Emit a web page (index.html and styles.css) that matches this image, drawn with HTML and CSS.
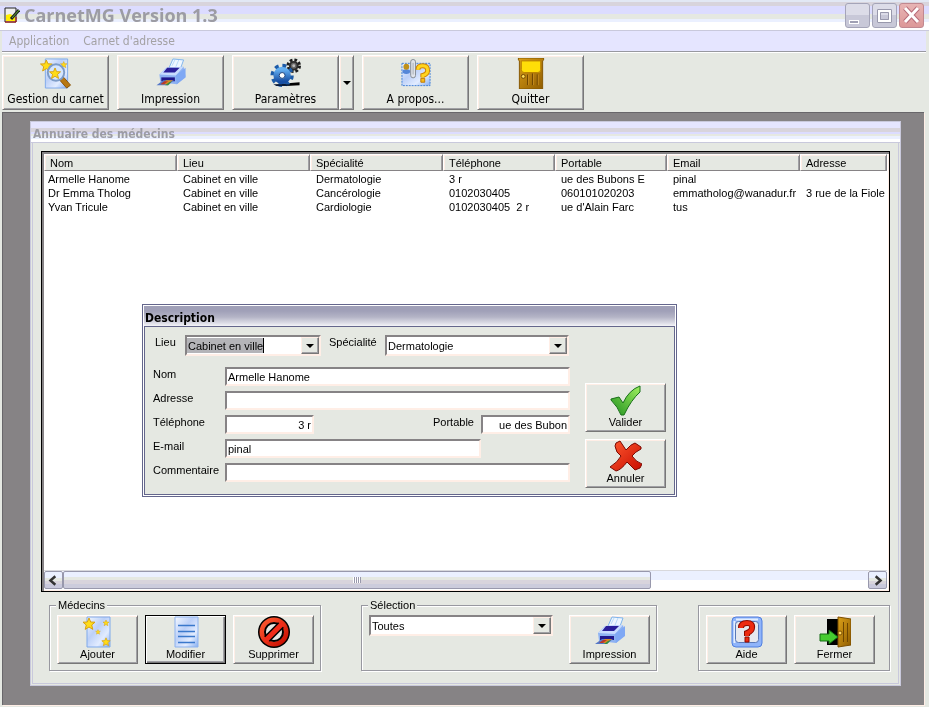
FILE: index.html
```html
<!DOCTYPE html>
<html lang="fr">
  <head>
    <meta charset="UTF-8" />
    <meta name="viewport" content="width=device-width, initial-scale=1.0" />
    <title>CarnetMG Version 1.3</title>
    <link rel="stylesheet" href="styles.css">
  </head>
  <body>
    <!-- shared icons -->
    <svg class="sprite" aria-hidden="true">
      <defs>
        <linearGradient id="sheet" x1="0" y1="0" x2="1" y2="1">
          <stop offset="0" stop-color="#f4f8ff" />
          <stop offset="0.4" stop-color="#bcd0f8" />
          <stop offset="0.7" stop-color="#e2ecff" />
          <stop offset="1" stop-color="#86aef0" />
        </linearGradient>
        <linearGradient id="gold" x1="0" y1="0" x2="1" y2="1">
          <stop offset="0" stop-color="#dba019" />
          <stop offset="1" stop-color="#8f5c00" />
        </linearGradient>
        <linearGradient id="blue" x1="0" y1="0" x2="0" y2="1">
          <stop offset="0" stop-color="#63aef0" />
          <stop offset="1" stop-color="#174fa5" />
        </linearGradient>
        <linearGradient id="red" x1="0" y1="0" x2="1" y2="1">
          <stop offset="0" stop-color="#ff5a30" />
          <stop offset="1" stop-color="#c80c00" />
        </linearGradient>
        <linearGradient id="green" x1="0" y1="1" x2="1" y2="0">
          <stop offset="0" stop-color="#209020" />
          <stop offset="1" stop-color="#a0f060" />
        </linearGradient>
        <path id="star" d="M0-6 1.7-2 6-1.8 2.7 1 3.8 5.4 0 3-3.8 5.4-2.7 1-6-1.8-1.7-2Z" fill="#ffdc18" stroke="#d8a010" />
      </defs>
      <symbol id="i-printer" viewBox="0 0 32 32">
        <path d="M14 10 18 1 29 2 25 13Z" fill="#eef6ff" stroke="#7fb4ec" />
        <path d="M17 8 20 2M21 9 24 2" stroke="#b8dafa" />
        <path d="M4 17 11 10 29 9 31 19 22 27 5 25Z" fill="#8eb2f2" />
        <path d="M11 10 29 9 21 18 4 17Z" fill="#c8dcff" />
        <path d="M12 10 25 10 20 15 8 15Z" fill="#2a1f9a" />
        <path d="M21 18 31 10 31 20 22 27Z" fill="#7fa8f4" />
        <path d="M6 20H20V24H6Z" fill="#20188c" />
        <path d="M8 23H19L13 28 1 28Z" fill="#5578c8" />
        <path d="M11 23H18L12 27 6 27Z" fill="#d88a20" />
        <path d="M9 24H13L9 27 5 27Z" fill="#b8382c" />
        <path d="M14 25 17 24 13 28H10Z" fill="#38903c" />
      </symbol>
      <symbol id="i-search" viewBox="0 0 32 32">
        <path d="M5 1H28V31H5Z" fill="url(#sheet)" stroke="#7fa9ea" />
        <use href="#star" x="6" y="8" />
        <use href="#star" transform="translate(24 7) scale(.55)" />
        <path d="M20 23 24 20 31 28 27 31Z" fill="#b87812" stroke="#8a5408" />
        <circle cx="16" cy="15" r="8.5" fill="#d4e6ff" stroke="#7d9cc8" stroke-width="2" />
        <use href="#star" transform="translate(15 16) scale(.95)" />
      </symbol>
      <symbol id="i-gears" viewBox="0 0 32 32">
        <path d="M5 27 30 25 30 28 16 29Z" fill="#000" />
        <circle cx="24" cy="8" r="6" fill="none" stroke="#1c1c1c" stroke-width="3" stroke-dasharray="2.700 2" />
        <circle cx="24" cy="8" r="4" fill="#666" stroke="#2c2c2c" stroke-width="2" />
        <circle cx="24" cy="8" r="1.500" fill="#bbb" />
        <circle cx="12" cy="18" r="10" fill="none" stroke="#1c5ba8" stroke-width="4" stroke-dasharray="4 3.850" />
        <circle cx="12" cy="18" r="6" fill="none" stroke="url(#blue)" stroke-width="6" />
        <circle cx="12" cy="18" r="3" fill="#fff" stroke="#123c7c" />
        <path d="M3 27H20L17 29H6Z" fill="#0a1c3c" />
      </symbol>
      <symbol id="i-about" viewBox="0 0 32 32">
        <path d="M1.500 5.500H30.500V28.500H1.500Z" fill="url(#sheet)" stroke="#3f7fd8" stroke-dasharray="2 1" />
        <ellipse cx="6" cy="14" rx="4" ry="2.500" fill="#5587d8" />
        <circle cx="6" cy="9" r="3" fill="#c09018" />
        <rect x="10.500" y="1.500" width="5" height="19" rx="2.500" fill="#dfe3ea" stroke="#868c94" />
        <path d="M13 5V17" stroke="#a8adb5" />
        <path d="M18 12Q18 8 23 8T28 13Q28 17 23 18V20" fill="none" stroke="#d08400" stroke-width="5" />
        <path d="M18 12Q18 8 23 8T28 13Q28 17 23 18V20" fill="none" stroke="#ffd51e" stroke-width="3" />
        <path d="M21 21H25V25H21Z" fill="#f8bc18" stroke="#c07800" />
      </symbol>
      <symbol id="i-door" viewBox="0 0 32 32">
        <path d="M3 0H29V2L28 3V32H4V3L3 2Z" fill="url(#gold)" stroke="#855700" />
        <path d="M6 3H26V12Q26 15 23 15H9Q6 15 6 12Z" fill="#ffde08" stroke="#b98100" />
        <path d="M12.500 17V28M17.500 16V28M22.500 17V28" stroke="#654000" />
        <path d="M13.500 17V28M18.500 16V28M23.500 17V28" stroke="#c48a20" />
        <circle cx="8" cy="19" r="2" fill="#ffdd58" stroke="#704600" />
      </symbol>
      <symbol id="i-add" viewBox="0 0 32 32">
        <path d="M5 1H28V31H5Z" fill="url(#sheet)" stroke="#7fa9ea" />
        <use href="#star" x="7" y="8" />
        <use href="#star" transform="translate(24 7) scale(.5)" />
        <use href="#star" transform="translate(16 16) scale(.4)" />
        <use href="#star" transform="translate(24 26) scale(.7)" />
      </symbol>
      <symbol id="i-edit" viewBox="0 0 32 32">
        <path d="M5 1H28V31H5Z" fill="url(#sheet)" stroke="#8db2ee" />
        <path d="M8 9.500H25M8 15.500H25M8 20.500H25M8 26.500H25" stroke="#3a78cc" stroke-width="1.500" />
      </symbol>
      <symbol id="i-delete" viewBox="0 0 32 32">
        <circle cx="16" cy="16" r="16" fill="#000" />
        <circle cx="16" cy="16" r="12" fill="#e5e8e2" stroke="url(#red)" stroke-width="5" />
        <circle cx="16" cy="16" r="9" fill="none" stroke="#000" stroke-width="2" />
        <path d="M9 23 23 9" stroke="#000" stroke-width="8" />
        <path d="M7 25 25 7" stroke="#f02c18" stroke-width="5" />
      </symbol>
      <symbol id="i-help" viewBox="0 0 32 32">
        <rect x="1" y="1" width="30" height="30" rx="4" fill="#8fb4fa" stroke="#4f7fe0" />
        <path d="M5 3.500H27M3.500 5V27" stroke="#e4eeff" stroke-width="2" />
        <rect x="4.500" y="5.500" width="23" height="21" rx="3" fill="#e6e8ee" stroke="#5878b8" />
        <path d="M10 12Q10 7 16 7T21 12Q21 15 16 17V20" fill="none" stroke="#8c0a00" stroke-width="6" />
        <path d="M10 12Q10 7 16 7T21 12Q21 15 16 17V20" fill="none" stroke="#ee2a10" stroke-width="4" />
        <path d="M14 21H18V26H14Z" fill="#ee2a10" stroke="#8c0a00" />
      </symbol>
      <symbol id="i-exit" viewBox="0 0 32 32">
        <path d="M8 3H20V29H8Z" fill="#000" />
        <path d="M19 1 32 3V29L19 31Z" fill="url(#gold)" stroke="#7c4e00" />
        <path d="M24.500 6V26M28.500 7V26" stroke="#6e4500" />
        <circle cx="21" cy="17" r="2" fill="#ffd860" stroke="#7c4e00" />
        <path d="M1 18H10V14L19 21 10 28V25H1Z" fill="#45cc30" stroke="#146c14" />
      </symbol>
      <symbol id="i-check" viewBox="0 0 32 32">
        <path d="M1 15 9 13 13 19Q19 6 30 2V8Q21 16 14 31H11Q8 23 1 16Z" fill="url(#green)" stroke="#187018" />
      </symbol>
      <symbol id="i-cross" viewBox="0 0 32 32">
        <path d="M6 3 10 1 16 10Q21 4 25 3L31 7 31 9Q25 12 22 16 26 22 32 24L30 28 25 30 17 22Q11 30 6 31L0 27Q8 22 11 16 6 13 5 6Z" fill="url(#red)" stroke="#7c0800" />
      </symbol>
    </svg>

    <header class="titlebar">
      <svg class="app-icon" viewBox="0 0 16 16" aria-hidden="true">
        <path d="M1 1H12V15H1Z" fill="#eee" stroke="#222" />
        <path d="M2 8 6 7 11 9V14H2Z" fill="#ffee00" />
        <path d="M1 15H12V10" fill="none" stroke="#b01010" />
        <path d="M7 12 15 3" stroke="#222" stroke-width="3" />
        <path d="M8 11 15 3" stroke="#5fae30" />
      </svg>
      <h1>CarnetMG Version 1.3</h1>
      <div class="window-buttons">
        <button type="button" class="win-btn" aria-label="Réduire">
          <svg viewBox="0 0 23 23"><path d="M3 16H13V20H3Z" fill="#fff" /><path d="M4 17H12V19H4Z" fill="#a0a0b4" /></svg>
        </button>
        <button type="button" class="win-btn" aria-label="Agrandir">
          <svg viewBox="0 0 23 23"><path d="M5.500 6.500H17.500V17.500H5.500Z" fill="none" stroke="#fff" stroke-width="3" /><path d="M4.500 5.500H18.500V18.500H4.500Z" fill="none" stroke="#9898ac" /><path d="M7.500 8.500H15.500V15.500H7.500Z" fill="none" stroke="#9898ac" /></svg>
        </button>
        <button type="button" class="win-btn win-close" aria-label="Fermer la fenêtre">
          <svg viewBox="0 0 23 23"><path d="M5 4 18 18M18 4 5 18" stroke="#b86c78" stroke-width="5" /><path d="M5 4 18 18M18 4 5 18" stroke="#fff" stroke-width="3" /></svg>
        </button>
      </div>
    </header>

    <nav class="menubar">
      <a href="#">Application</a>
      <a href="#">Carnet d'adresse</a>
    </nav>

    <div class="toolbar">
      <button type="button" class="btn tool"><svg class="icon"><use href="#i-search" /></svg>Gestion du carnet</button>
      <button type="button" class="btn tool"><svg class="icon"><use href="#i-printer" /></svg>Impression</button>
      <div class="split">
        <button type="button" class="btn tool"><svg class="icon"><use href="#i-gears" /></svg>Paramètres</button>
        <button type="button" class="btn split-arrow" aria-label="Options des paramètres"><span class="arrow"></span></button>
      </div>
      <button type="button" class="btn tool"><svg class="icon"><use href="#i-about" /></svg>A propos...</button>
      <button type="button" class="btn tool"><svg class="icon"><use href="#i-door" /></svg>Quitter</button>
    </div>

    <main class="workspace">
      <section class="child">
        <h2 class="child-title">Annuaire des médecins</h2>
        <div class="child-body">
          <div class="list">
            <div class="list-rows">
              <table>
                <thead>
                  <tr>
                    <th class="wide">Nom</th>
                    <th class="wide">Lieu</th>
                    <th class="wide">Spécialité</th>
                    <th class="phone">Téléphone</th>
                    <th class="phone">Portable</th>
                    <th class="wide">Email</th>
                    <th>Adresse</th>
                  </tr>
                </thead>
                <tbody>
                  <tr>
                    <td>Armelle Hanome</td>
                    <td>Cabinet en ville</td>
                    <td>Dermatologie</td>
                    <td>3 r</td>
                    <td>ue des Bubons E</td>
                    <td>pinal</td>
                    <td></td>
                  </tr>
                  <tr>
                    <td>Dr Emma Tholog</td>
                    <td>Cabinet en ville</td>
                    <td>Cancérologie</td>
                    <td>0102030405</td>
                    <td>060101020203</td>
                    <td>emmatholog@wanadur.fr</td>
                    <td>3 rue de la Fiole</td>
                  </tr>
                  <tr>
                    <td>Yvan Tricule</td>
                    <td>Cabinet en ville</td>
                    <td>Cardiologie</td>
                    <td>0102030405&nbsp; 2 r</td>
                    <td>ue d'Alain Farc</td>
                    <td>tus</td>
                    <td></td>
                  </tr>
                </tbody>
              </table>
            </div>
            <div class="scrollbar">
              <button type="button" class="scroll-btn" aria-label="Défiler à gauche"><svg viewBox="0 0 9 9"><path d="M6 1 2 4.500 6 8" /></svg></button>
              <div class="scroll-track">
                <div class="scroll-thumb"><span class="grip"></span></div>
              </div>
              <button type="button" class="scroll-btn" aria-label="Défiler à droite"><svg viewBox="0 0 9 9"><path d="M3 1 7 4.500 3 8" /></svg></button>
            </div>
          </div>

          <div class="groups">
            <fieldset class="group">
              <legend>Médecins</legend>
              <div class="group-row">
                <button type="button" class="btn small"><svg class="icon"><use href="#i-add" /></svg>Ajouter</button>
                <button type="button" class="btn small default"><svg class="icon"><use href="#i-edit" /></svg>Modifier</button>
                <button type="button" class="btn small"><svg class="icon"><use href="#i-delete" /></svg>Supprimer</button>
              </div>
            </fieldset>
            <fieldset class="group">
              <legend><label for="selection">Sélection</label></legend>
              <div class="group-row selection-row">
                <div class="combo">
                  <select id="selection"><option>Toutes</option></select>
                  <span class="combo-btn"><span class="arrow"></span></span>
                </div>
                <button type="button" class="btn small"><svg class="icon"><use href="#i-printer" /></svg>Impression</button>
              </div>
            </fieldset>
            <fieldset class="group group-end">
              <legend aria-label="Fenêtre"></legend>
              <div class="group-row">
                <button type="button" class="btn small"><svg class="icon"><use href="#i-help" /></svg>Aide</button>
                <button type="button" class="btn small"><svg class="icon"><use href="#i-exit" /></svg>Fermer</button>
              </div>
            </fieldset>
          </div>
        </div>
      </section>
    </main>

    <form class="dialog">
      <h2 class="dialog-title">Description</h2>
      <div class="dialog-body">
        <div class="choices">
          <label for="lieu">Lieu</label>
          <div class="combo">
            <input type="text" id="lieu" value="Cabinet en ville" />
            <span class="picked"></span>
            <span class="combo-btn"><span class="arrow"></span></span>
          </div>
          <label for="specialite">Spécialité</label>
          <div class="combo">
            <select id="specialite"><option>Dermatologie</option></select>
            <span class="combo-btn"><span class="arrow"></span></span>
          </div>
        </div>
        <div class="dialog-main">
          <div class="fields">
            <label for="nom">Nom</label>
            <input type="text" id="nom" class="full" value="Armelle Hanome" />
            <label for="adresse">Adresse</label>
            <input type="text" id="adresse" class="full" />
            <label for="telephone">Téléphone</label>
            <input type="text" id="telephone" class="number" value="3 r" />
            <label for="portable" class="portable">Portable</label>
            <input type="text" id="portable" class="number" value="ue des Bubon" />
            <label for="email">E-mail</label>
            <input type="text" id="email" class="email" value="pinal" />
            <label for="commentaire">Commentaire</label>
            <input type="text" id="commentaire" class="full" />
          </div>
          <div class="dialog-actions">
            <button type="button" class="btn small"><svg class="icon"><use href="#i-check" /></svg>Valider</button>
            <button type="button" class="btn small"><svg class="icon"><use href="#i-cross" /></svg>Annuler</button>
          </div>
        </div>
      </div>
    </form>
  </body>
</html>
```
FILE: styles.css
```css
* {
  box-sizing: border-box;
}

body {
  display: flex;
  flex-direction: column;
  min-height: 100vh;
  margin: 0;
  background-color: #e5e8e2;
  color: #000;
  font-family: "Liberation Sans", Arial, sans-serif;
  font-size: 11px;
  line-height: 14px;
}

h1,
h2 {
  margin: 0;
}

input,
select,
button {
  margin: 0;
  border-radius: 0;
  color: #000;
  font-family: inherit;
  font-size: 11px;
  line-height: 14px;
}

.sprite {
  position: absolute;
  width: 0;
  height: 0;
}

.icon {
  display: block;
  width: 32px;
  height: 32px;
}

/* main window */
.titlebar {
  display: flex;
  align-items: center;
  gap: 4px;
  height: 31px;
  padding: 0 5px 0 4px;
  border-bottom: 1px solid #c9c9dc;
  background: linear-gradient(#e2e8f4 2px, #d8d4dc 2px 6px, #dcdcff 6px 14px, #e5e8e2 14px 19px, #ebf0ff 19px 22px, #fff 22px);
}

.app-icon {
  width: 16px;
  height: 16px;
}

.titlebar h1 {
  color: #9c9ca4;
  font-family: "Open Sans", sans-serif;
  font-size: 18px;
  line-height: 28px;
}

.window-buttons {
  display: flex;
  gap: 2px;
  margin-left: auto;
}

.win-btn {
  width: 25px;
  height: 25px;
  padding: 0;
  border: 1px solid #a4a4b8;
  border-radius: 3px;
  background: linear-gradient(#dcdce8 11px, #c8c8d8 11px);
}

.win-btn svg {
  display: block;
}

.win-close {
  border-color: #c08890;
  background: linear-gradient(#e8b4b4, #dc9898);
}

.menubar {
  display: flex;
  gap: 14px;
  margin: 0 3px 0 2px;
  height: 21px;
  padding: 0 7px;
  border-bottom: 1px solid #9898a0;
  background-color: #e5e5ff;
  box-shadow: 0 1px #fff;
}

.menubar a {
  color: #a4a2a4;
  font-family: "DejaVu Sans Condensed", sans-serif;
  font-size: 12px;
  line-height: 20px;
  text-decoration: none;
}

.toolbar {
  display: flex;
  gap: 8px;
  padding: 3px 2px 2px;
}

.btn {
  display: flex;
  flex-direction: column;
  align-items: center;
  padding: 0;
  border: 1px solid;
  border-color: #fff #777 #777 #fff;
  background-color: #e5e8e2;
  box-shadow: inset 1px 1px #ffeee6, inset -1px -1px #a0a0a4;
  white-space: nowrap;
}

.tool {
  width: 107px;
  height: 55px;
  padding-top: 2px;
  font-family: "DejaVu Sans Condensed", sans-serif;
  font-size: 12px;
  line-height: 20px;
}

.split {
  display: flex;
}

.split-arrow {
  justify-content: center;
  width: 15px;
}

.arrow {
  border: 4px solid transparent;
  border-top-color: #000;
  border-bottom-width: 0;
}

.workspace {
  display: flex;
  flex: 1;
  margin: 0 5px 2px 2px;
  padding: 8px 23px 19px 27px;
  border-top: 1px solid #68666a;
  border-left: 1px solid #68666a;
  background-color: #868385;
  box-shadow: 1px 1px #ffeee6;
}

/* child window */
.child {
  display: flex;
  flex: 1;
  flex-direction: column;
  min-width: 0;
  border: 1px solid #c9c9dc;
  background-color: #e5e8e2;
}

.child-title {
  height: 21px;
  padding-left: 2px;
  border-bottom: 1px solid #c9c9dc;
  background: linear-gradient(#e5e5ff 6px, #d8d4dc 6px 10px, #dcdcff 10px 12px, #e5e8e2 12px 14px, #ebf0ff 14px 17px, #fff 17px);
  color: #9c9ca4;
  font-family: "DejaVu Sans Condensed", sans-serif;
  font-size: 12px;
  line-height: 24px;
}

.child-body {
  display: flex;
  flex: 1;
  flex-direction: column;
  gap: 6px;
  margin: 0 1px 1px;
  padding: 8px 8px 12px;
  border: 1px solid #c9c9dc;
  border-top: 0;
}

.list {
  display: flex;
  flex: 1;
  flex-direction: column;
  padding: 2px;
  border: 1px solid #000;
  background-color: #fff;
  box-shadow: inset 2px 2px #868385, inset -1px -1px #ffeee6;
}

.list-rows {
  flex: 1;
}

.list table {
  width: 100%;
  border-collapse: separate;
  border-spacing: 0;
  table-layout: fixed;
}

.list th {
  height: 17px;
  padding: 0 0 0 5px;
  border: 1px solid;
  border-color: #fff #868385 #868385 #fff;
  background-color: #e5e8e2;
  box-shadow: inset 1px 1px #ffeee6, inset -1px 0 #a0a0a4;
  font-weight: normal;
  text-align: left;
}

.list th.wide {
  width: 133px;
}

.list th.phone {
  width: 112px;
}

.list td {
  height: 14px;
  padding: 0 0 0 6px;
  white-space: nowrap;
}

.list td:first-child {
  padding-left: 4px;
}

.list tbody::before {
  content: "";
  display: table-row;
  height: 1px;
}

.scrollbar {
  display: flex;
  height: 19px;
  border-top: 1px solid #d8d8dc;
}

.scroll-btn {
  display: flex;
  align-items: center;
  justify-content: center;
  width: 19px;
  padding: 0;
  border: 1px solid #9898ac;
  border-radius: 2px;
  background: linear-gradient(#ebf0ff 6px, #e5e8e2 6px 9px, #d8d4dc 9px 12px, #c9c9dc 12px);
}

.scroll-btn svg {
  width: 11px;
  height: 11px;
}

.scroll-btn path {
  fill: none;
  stroke: #333;
  stroke-width: 2;
}

.scroll-track {
  flex: 1;
  background: linear-gradient(#ebf0ff 9px, #fff 9px);
}

.scroll-thumb {
  display: flex;
  align-items: center;
  justify-content: center;
  width: 73%;
  height: 18px;
  border: 1px solid #9898ac;
  border-radius: 2px;
  background: linear-gradient(#ebf0ff 5px, #e5e8e2 5px 8px, #d8d4dc 8px 12px, #ccccdc 12px);
}

.grip {
  width: 8px;
  height: 6px;
  background: repeating-linear-gradient(90deg, #fff 0 1px, #9898ac 1px 2px);
}

.groups {
  display: flex;
  gap: 40px;
  padding: 0 0 0 8px;
}

.group {
  min-width: 0;
  margin: 0;
  padding: 0 6px 6px 7px;
  border: 1px solid #9898a0;
  box-shadow: 1px 1px #fff, inset 1px 1px #fff;
}

.group legend {
  height: 14px;
  margin-left: -1px;
  padding: 0 2px;
  background-color: #e5e8e2;
}

.group-end {
  margin-left: auto;
  padding-right: 14px;
}

.group-end legend {
  padding: 0;
}

.group-row {
  display: flex;
  gap: 7px;
  padding-top: 3px;
}

.selection-row {
  gap: 16px;
}

.selection-row .combo {
  width: 184px;
}

.small {
  width: 81px;
  height: 49px;
  line-height: 13px;
}

.default {
  border-color: #000;
  box-shadow: inset 1px 1px #fff, inset -1px -1px #777, inset -2px -2px #a0a0a4;
}

/* text boxes and drop-downs */
input,
select {
  width: 100%;
  height: 19px;
  padding: 0 1px;
  border: 2px solid;
  border-color: #868385 #ffeee6 #ffeee6 #868385;
  background-color: #fff;
  outline: none;
}

.combo {
  display: grid;
  height: 21px;
}

.combo > * {
  grid-area: 1 / 1;
}

.combo input,
.combo select {
  height: 21px;
  appearance: none;
}

.combo-btn {
  display: flex;
  align-items: center;
  justify-content: center;
  justify-self: end;
  width: 18px;
  margin: 2px;
  border: 1px solid;
  border-color: #ffeee6 #777 #777 #ffeee6;
  background-color: #e5e8e2;
  box-shadow: inset -1px -1px #a0a0a4;
  pointer-events: none;
}

.picked {
  width: 77px;
  margin: 3px 2px;
  border-right: 1px solid #000;
  background-color: #b4b4b8;
  mix-blend-mode: multiply;
  pointer-events: none;
}

/* description window */
.dialog {
  position: absolute;
  top: 304px;
  left: 142px;
  width: 535px;
  padding: 1px;
  border: 1px solid #64668c;
  background-color: #fff;
}

.dialog-title {
  height: 20px;
  padding-left: 1px;
  background: linear-gradient(#a0a0b8 5px, #b4b4c6 11px, #dcdce6 17px, #f4f4f8);
  font-family: "DejaVu Sans Condensed", sans-serif;
  font-size: 12px;
  line-height: 24px;
}

.dialog-body {
  padding: 8px 8px 6px;
  border: 1px solid #64668c;
  background-color: #e5e8e2;
}

.choices {
  display: grid;
  grid-template-columns: 22px 136px 48px 184px;
  gap: 8px;
  padding-left: 2px;
}

.dialog-main {
  display: flex;
  gap: 15px;
  padding-top: 11px;
}

.fields {
  display: grid;
  grid-template-columns: 72px 89px 1fr 48px 89px;
  align-content: start;
  gap: 5px 0;
  flex: 1;
}

.fields label {
  grid-column: 1;
}

.fields .portable {
  grid-column: 4;
}

.fields .full {
  grid-column: 2 / 6;
}

.fields .email {
  grid-column: 2 / 5;
}

.number {
  text-align: right;
}

.dialog-actions {
  display: flex;
  flex-direction: column;
  gap: 7px;
  padding-top: 16px;
}
```
